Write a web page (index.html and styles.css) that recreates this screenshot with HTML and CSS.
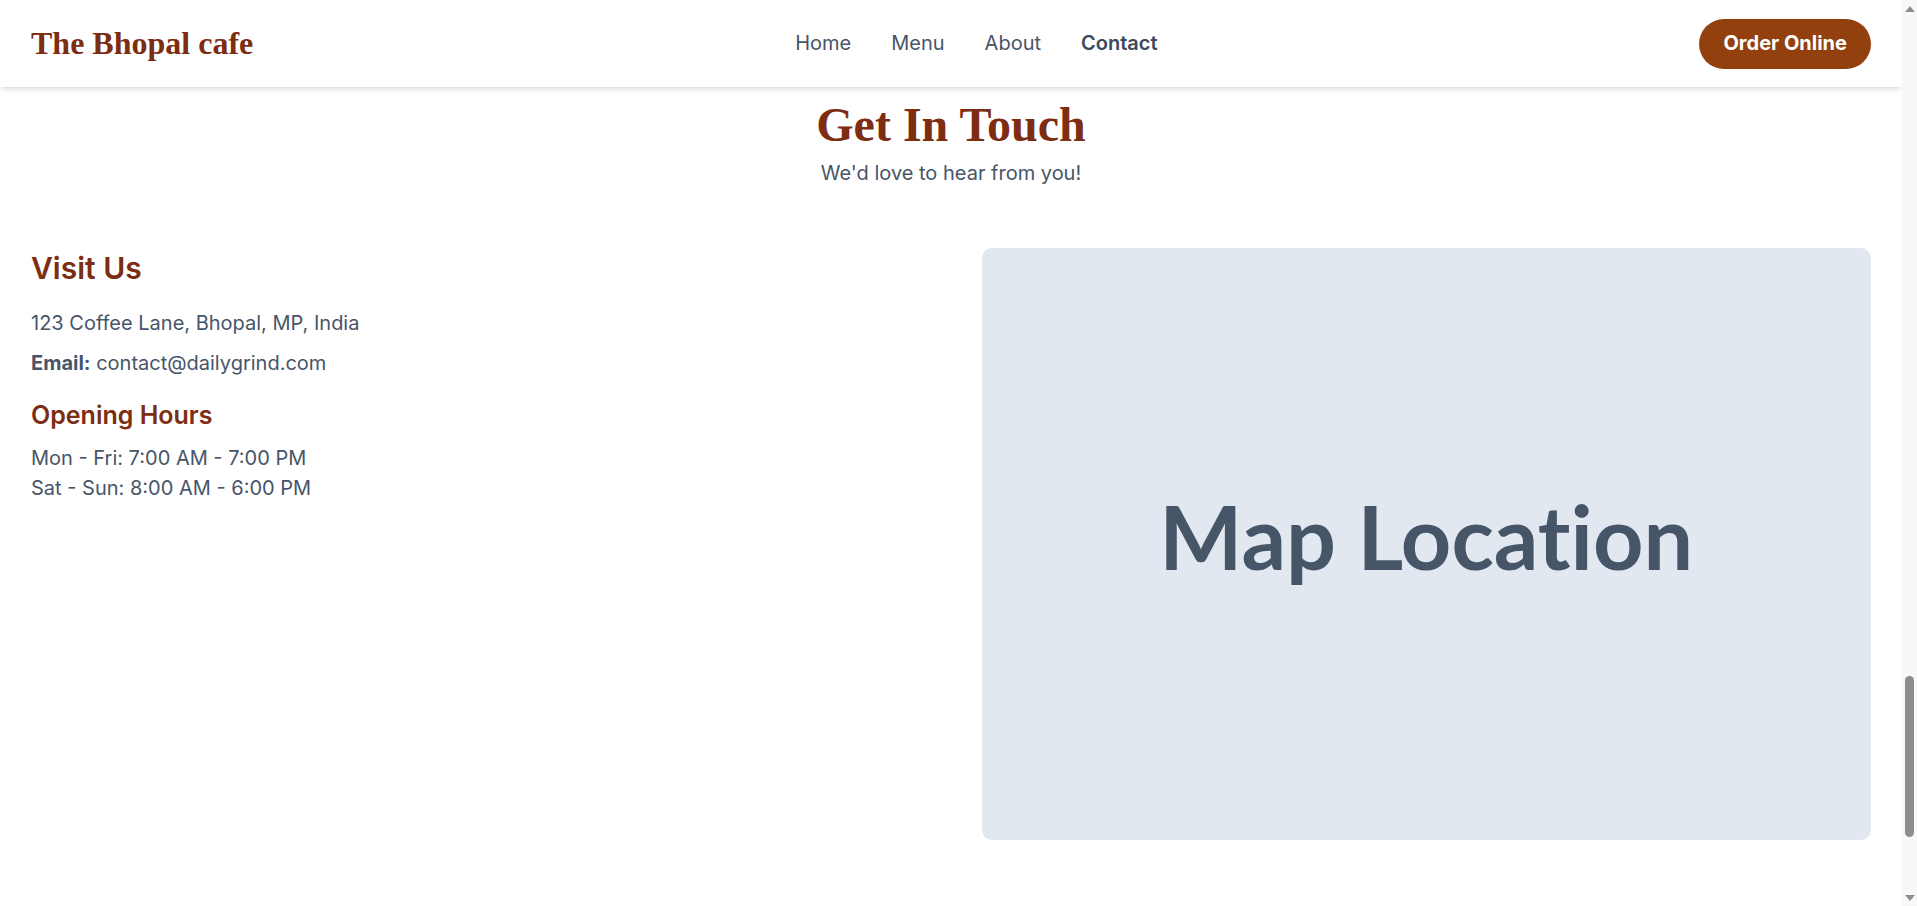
FILE: index.html
```html
<!DOCTYPE html>
<html lang="en">
<head>
<meta charset="utf-8">
<title>Contact - The Bhopal cafe</title>
<link rel="stylesheet" href="styles.css">
</head>
<body>
<header class="site-header">
  <a class="logo" href="#">The Bhopal cafe</a>
  <nav class="nav">
    <a href="#">Home</a>
    <a href="#">Menu</a>
    <a href="#">About</a>
    <a href="#" class="active">Contact</a>
  </nav>
  <a class="order-btn" href="#">Order Online</a>
</header>
<main class="contact">
  <div class="contact-head">
    <h1 class="title">Get In Touch</h1>
    <p class="subtitle">We'd love to hear from you!</p>
  </div>
  <div class="contact-grid">
    <div class="info">
      <h2 class="info-title">Visit Us</h2>
      <p class="info-line">123 Coffee Lane, Bhopal, MP, India</p>
      <p class="info-line"><strong>Email:</strong> contact@dailygrind.com</p>
      <h3 class="hours-title">Opening Hours</h3>
      <p class="hours">Mon - Fri: 7:00 AM - 7:00 PM<br>Sat - Sun: 8:00 AM - 6:00 PM</p>
    </div>
    <div class="map">Map Location</div>
  </div>
</main>
<div class="scrollbar" aria-hidden="true">
  <span class="sb-arrow sb-up"></span>
  <span class="sb-track"><span class="sb-thumb"></span></span>
  <span class="sb-arrow sb-down"></span>
</div>
</body>
</html>
```
FILE: styles.css
```css
body {
  margin: 0 15px 0 0;
  font-family: Inter, "Noto Sans", sans-serif;
  color: #475569;
  background: #ffffff;
}
a {
  text-decoration: none;
}
.site-header {
  height: 87px;
  padding: 0 31px;
  display: flex;
  align-items: center;
  justify-content: space-between;
  background: #ffffff;
  box-shadow: 0 4px 6px -1px rgba(0, 0, 0, 0.1), 0 2px 4px -2px rgba(0, 0, 0, 0.1);
  position: relative;
  z-index: 2;
}
.logo {
  font-family: "Liberation Serif", "DejaVu Serif", serif;
  font-weight: 700;
  font-size: 32px;
  color: #7c2d12;
}
.nav {
  display: flex;
  gap: 40px;
  margin-top: -2px;
}
.nav a {
  font-size: 20px;
  color: #475569;
}
.nav a.active {
  font-weight: 600;
  color: #3d4a5c;
}
.order-btn {
  height: 50px;
  padding: 0 24px 2px;
  box-sizing: border-box;
  display: flex;
  align-items: center;
  border-radius: 9999px;
  background: #92400e;
  color: #ffffff;
  font-weight: 700;
  font-size: 20px;
}
.contact {
  padding: 9px 31px 66px;
}
.contact-head {
  text-align: center;
}
.title {
  margin: 0;
  font-family: "Liberation Serif", "DejaVu Serif", serif;
  font-weight: 700;
  font-size: 48px;
  line-height: 1.2;
  color: #7c2d12;
}
.subtitle {
  margin: 5px 0 0;
  font-size: 20px;
  line-height: 28px;
}
.contact-grid {
  margin-top: 61px;
  display: grid;
  grid-template-columns: 1fr 1fr;
  gap: 61px;
  align-items: start;
}
.info-title {
  margin: 0 0 20px;
  font-size: 30px;
  line-height: 40px;
  font-weight: 600;
  color: #7c2d12;
}
.info-line {
  margin: 0 0 10px;
  font-size: 20px;
  line-height: 30px;
}
.info-line strong {
  font-weight: 700;
  color: #475569;
}
.hours-title {
  margin: 21px 0 12px;
  font-size: 25px;
  line-height: 32px;
  font-weight: 600;
  color: #7c2d12;
}
.hours {
  margin: 0;
  font-size: 20px;
  line-height: 30px;
}
.map {
  height: 592px;
  box-sizing: border-box;
  padding-bottom: 16px;
  border-radius: 10px;
  background: #e2e8f0;
  display: flex;
  align-items: center;
  justify-content: center;
  font-family: Lato, "Noto Sans", sans-serif;
  font-weight: 700;
  font-size: 88px;
  font-variant-ligatures: none;
  color: #475569;
}
.scrollbar {
  position: fixed;
  top: 0;
  right: 0;
  width: 15px;
  height: 100vh;
  display: flex;
  flex-direction: column;
  background: #f8f8f8;
  z-index: 5;
}
.sb-arrow {
  height: 17px;
  display: flex;
  justify-content: center;
  align-items: center;
}
.sb-up::before,
.sb-down::before {
  content: "";
  width: 0;
  height: 0;
  border-left: 5px solid transparent;
  border-right: 5px solid transparent;
}
.sb-up::before {
  border-bottom: 6px solid #8f8f8f;
}
.sb-down::before {
  border-top: 6px solid #8f8f8f;
}
.sb-track {
  flex: 1;
  display: flex;
  flex-direction: column;
  padding-top: 659px;
}
.sb-thumb {
  height: 161px;
  margin: 0 3px;
  border-radius: 5px;
  background: #8d8d8d;
}
```
